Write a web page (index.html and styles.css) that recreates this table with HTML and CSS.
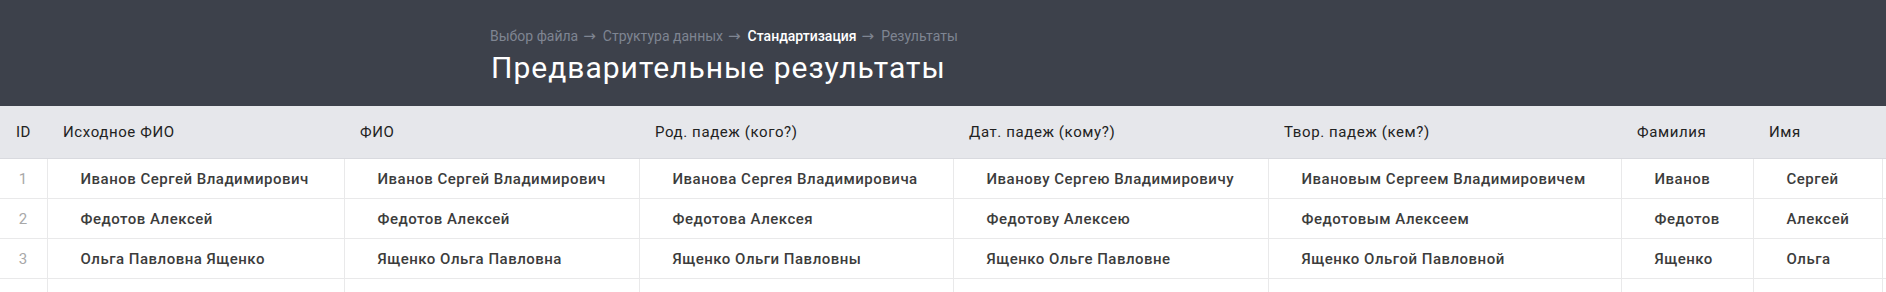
FILE: index.html
```html
<!DOCTYPE html>
<html lang="ru">
<head>
<meta charset="utf-8">
<title>Предварительные результаты</title>
<link rel="stylesheet" href="styles.css">
</head>
<body>
<header class="page-head">
  <nav class="crumbs">
    <span class="crumb">Выбор файла</span><span class="arrow">→</span>
    <span class="crumb">Структура данных</span><span class="arrow">→</span>
    <span class="crumb active">Стандартизация</span><span class="arrow">→</span>
    <span class="crumb">Результаты</span>
  </nav>
  <h1 class="title">Предварительные результаты</h1>
</header>
<main class="table-wrap">
  <table class="results">
    <colgroup>
      <col class="c-id"><col class="c-src"><col class="c-fio"><col class="c-rod"><col class="c-dat"><col class="c-tvor"><col class="c-fam"><col class="c-name"><col class="c-otch">
    </colgroup>
    <thead>
      <tr>
        <th class="id">ID</th>
        <th>Исходное ФИО</th>
        <th>ФИО</th>
        <th>Род. падеж (кого?)</th>
        <th>Дат. падеж (кому?)</th>
        <th>Твор. падеж (кем?)</th>
        <th>Фамилия</th>
        <th>Имя</th>
        <th>Отчество</th>
      </tr>
    </thead>
    <tbody>
      <tr>
        <td class="id">1</td>
        <td>Иванов Сергей Владимирович</td>
        <td>Иванов Сергей Владимирович</td>
        <td>Иванова Сергея Владимировича</td>
        <td>Иванову Сергею Владимировичу</td>
        <td>Ивановым Сергеем Владимировичем</td>
        <td>Иванов</td>
        <td>Сергей</td>
        <td>Владимирович</td>
      </tr>
      <tr>
        <td class="id">2</td>
        <td>Федотов Алексей</td>
        <td>Федотов Алексей</td>
        <td>Федотова Алексея</td>
        <td>Федотову Алексею</td>
        <td>Федотовым Алексеем</td>
        <td>Федотов</td>
        <td>Алексей</td>
        <td></td>
      </tr>
      <tr>
        <td class="id">3</td>
        <td>Ольга Павловна Ященко</td>
        <td>Ященко Ольга Павловна</td>
        <td>Ященко Ольги Павловны</td>
        <td>Ященко Ольге Павловне</td>
        <td>Ященко Ольгой Павловной</td>
        <td>Ященко</td>
        <td>Ольга</td>
        <td>Павловна</td>
      </tr>
      <tr>
        <td class="id">4</td>
        <td>&nbsp;</td><td></td><td></td><td></td><td></td><td></td><td></td><td></td>
      </tr>
    </tbody>
  </table>
</main>
</body>
</html>
```

FILE: styles.css
```css
html, body {
  margin: 0;
  padding: 0;
  background: #ffffff;
  overflow: hidden;
  font-family: Roboto, "Noto Sans", "Liberation Sans", sans-serif;
}

.page-head {
  background: #3d414b;
  height: 106px;
  box-sizing: border-box;
  padding: 27px 0 0 490px;
}

.crumbs {
  display: flex;
  align-items: baseline;
  font-size: 14px;
  line-height: 18px;
  color: #7f8592;
  white-space: nowrap;
}

.crumb.active {
  color: #ffffff;
  font-weight: 500;
}

.arrow {
  font-family: "DejaVu Sans", sans-serif;
  font-size: 15px;
  margin: 0 7px 0 5px;
}

.title {
  margin: 5px 0 0 1px;
  font-size: 30px;
  line-height: 36px;
  font-weight: 400;
  color: #ffffff;
  letter-spacing: 1px;
  white-space: nowrap;
}

.table-wrap {
  width: 100%;
  overflow: hidden;
}

.results {
  border-collapse: collapse;
  table-layout: fixed;
  width: 2040px;
}

.c-id { width: 47px; }
.c-src { width: 297px; }
.c-fio { width: 295px; }
.c-rod { width: 314px; }
.c-dat { width: 315px; }
.c-tvor { width: 353px; }
.c-fam { width: 132px; }
.c-name { width: 129px; }
.c-otch { width: 158px; }

.results th {
  background: #e6e7eb;
  height: 52px;
  padding: 0 0 0 16px;
  text-align: left;
  font-size: 15px;
  letter-spacing: 0.6px;
  font-weight: 400;
  color: #222222;
  border-bottom: 1px solid #d9dadf;
  white-space: nowrap;
}

.results th.id {
  padding: 0;
  text-align: center;
}

.results td {
  height: 39px;
  padding: 0 0 0 33px;
  font-size: 15px;
  letter-spacing: 0.5px;
  font-weight: 500;
  color: #3c3c3c;
  border-bottom: 1px solid #e9e9ea;
  border-left: 1px solid #e9e9ea;
  white-space: nowrap;
}

.results td.id {
  padding: 0;
  text-align: center;
  border-left: none;
  color: #a8a8a8;
  font-weight: 400;
}

.results tbody tr:last-child td.id {
  color: transparent;
}
```
